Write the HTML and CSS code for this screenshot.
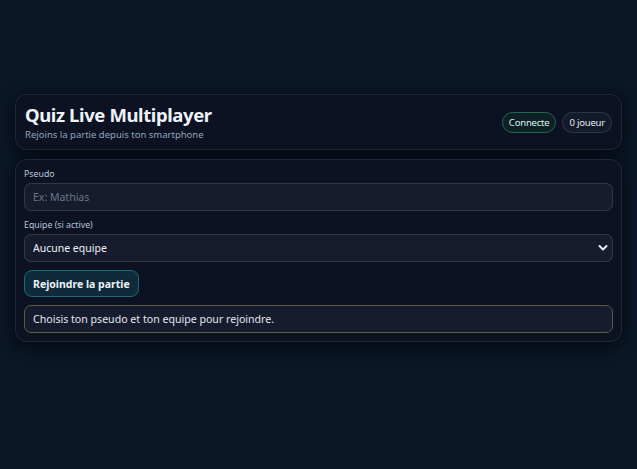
FILE: index.html
```html
<!DOCTYPE html>
<html lang="fr">
<head>
<meta charset="utf-8">
<title>Quiz Live Multiplayer</title>
<link rel="stylesheet" href="styles.css">
</head>
<body>
<main class="wrap">
  <header class="card head">
    <div class="titles">
      <h1 class="title">Quiz Live Multiplayer</h1>
      <p class="sub">Rejoins la partie depuis ton smartphone</p>
    </div>
    <div class="pills">
      <span class="pill ok">Connecte</span>
      <span class="pill">0 joueur</span>
    </div>
  </header>
  <section class="card form">
    <label class="lbl" for="pseudo">Pseudo</label>
    <input class="field" id="pseudo" type="text" placeholder="Ex: Mathias">
    <label class="lbl" for="team">Equipe (si active)</label>
    <div class="selwrap">
      <select class="field sel" id="team"><option>Aucune equipe</option></select>
      <svg class="chev" width="10" height="8" viewBox="0 0 10 8"><path d="M1.5 2 L5 5.5 L8.5 2" fill="none" stroke="#e8ecf4" stroke-width="2" stroke-linecap="round" stroke-linejoin="round"/></svg>
    </div>
    <div class="actions"><button class="btn" type="button">Rejoindre la partie</button></div>
    <div class="status">Choisis ton pseudo et ton equipe pour rejoindre.</div>
  </section>
</main>
</body>
</html>
```
FILE: styles.css
```css
* { box-sizing: border-box; }
html, body { margin: 0; padding: 0; }
body {
  background: #0b1727;
  font-family: "Trebuchet MS", "Noto Sans", sans-serif;
  color: #e8ecf4;
  min-height: 469px;
}
.wrap {
  width: 607px;
  margin: 94px 0 0 15px;
  display: flex;
  flex-direction: column;
  gap: 9px;
}
.card {
  background: #0c1222;
  border: 1px solid rgba(148, 163, 184, 0.14);
  border-radius: 12px;
  box-shadow: 0 4px 14px 4px rgba(0, 0, 0, 0.45);
}
.head {
  height: 56px;
  padding: 0 9px 0 9px;
  display: flex;
  align-items: center;
  justify-content: space-between;
}
.title {
  margin: 0;
  font-size: 18.5px;
  letter-spacing: -0.4px;
  font-weight: 700;
  line-height: 22px;
  color: #eef2f8;
}
.sub {
  margin: 3px 0 0;
  font-size: 9.5px;
  line-height: 11px;
  color: #93a3bd;
}
.pills { display: flex; gap: 6px; }
.pill {
  height: 21px;
  padding: 0 6px;
  border-radius: 11px;
  border: 1px solid rgba(148, 163, 184, 0.2);
  background: #121a2c;
  font-size: 9.5px;
  letter-spacing: -0.2px;
  line-height: 19px;
  color: #e8ecf4;
}
.pill.ok {
  border-color: #1f6b52;
  background: #0f1f26;
  color: #d7f5ea;
}
.form {
  padding: 8px 8px 8px 8px;
  display: flex;
  flex-direction: column;
}
.lbl {
  font-size: 8.8px;
  line-height: 12px;
  color: #b8c6dc;
  margin-bottom: 3px;
  margin-left: 0;
}
.field {
  width: 100%;
  height: 28px;
  border: 1px solid rgba(148, 163, 184, 0.2);
  background: #161c2e;
  border-radius: 7px;
  padding: 0 8px;
  font-family: inherit;
  font-size: 10.5px;
  color: #eef2f8;
  outline: none;
}
.field::placeholder { color: #6b7588; }
#pseudo { margin-bottom: 8px; }
.selwrap { position: relative; }
.sel { appearance: none; -webkit-appearance: none; }
.chev { position: absolute; right: 5px; top: 10px; }
.actions { margin-top: 8px; }
.btn {
  height: 27px;
  padding: 0 8px;
  border: 1px solid #1d6a7c;
  background: #0f2a3a;
  border-radius: 8px;
  font-family: inherit;
  font-weight: 700;
  font-size: 10.5px;
  color: #eef2f8;
}
.status {
  margin-top: 8px;
  height: 28px;
  border: 1px solid #5e5a3e;
  background: #161c2e;
  border-radius: 7px;
  padding: 0 8px;
  display: flex;
  align-items: center;
  font-size: 10.6px;
  color: #e2e7f0;
}
```
